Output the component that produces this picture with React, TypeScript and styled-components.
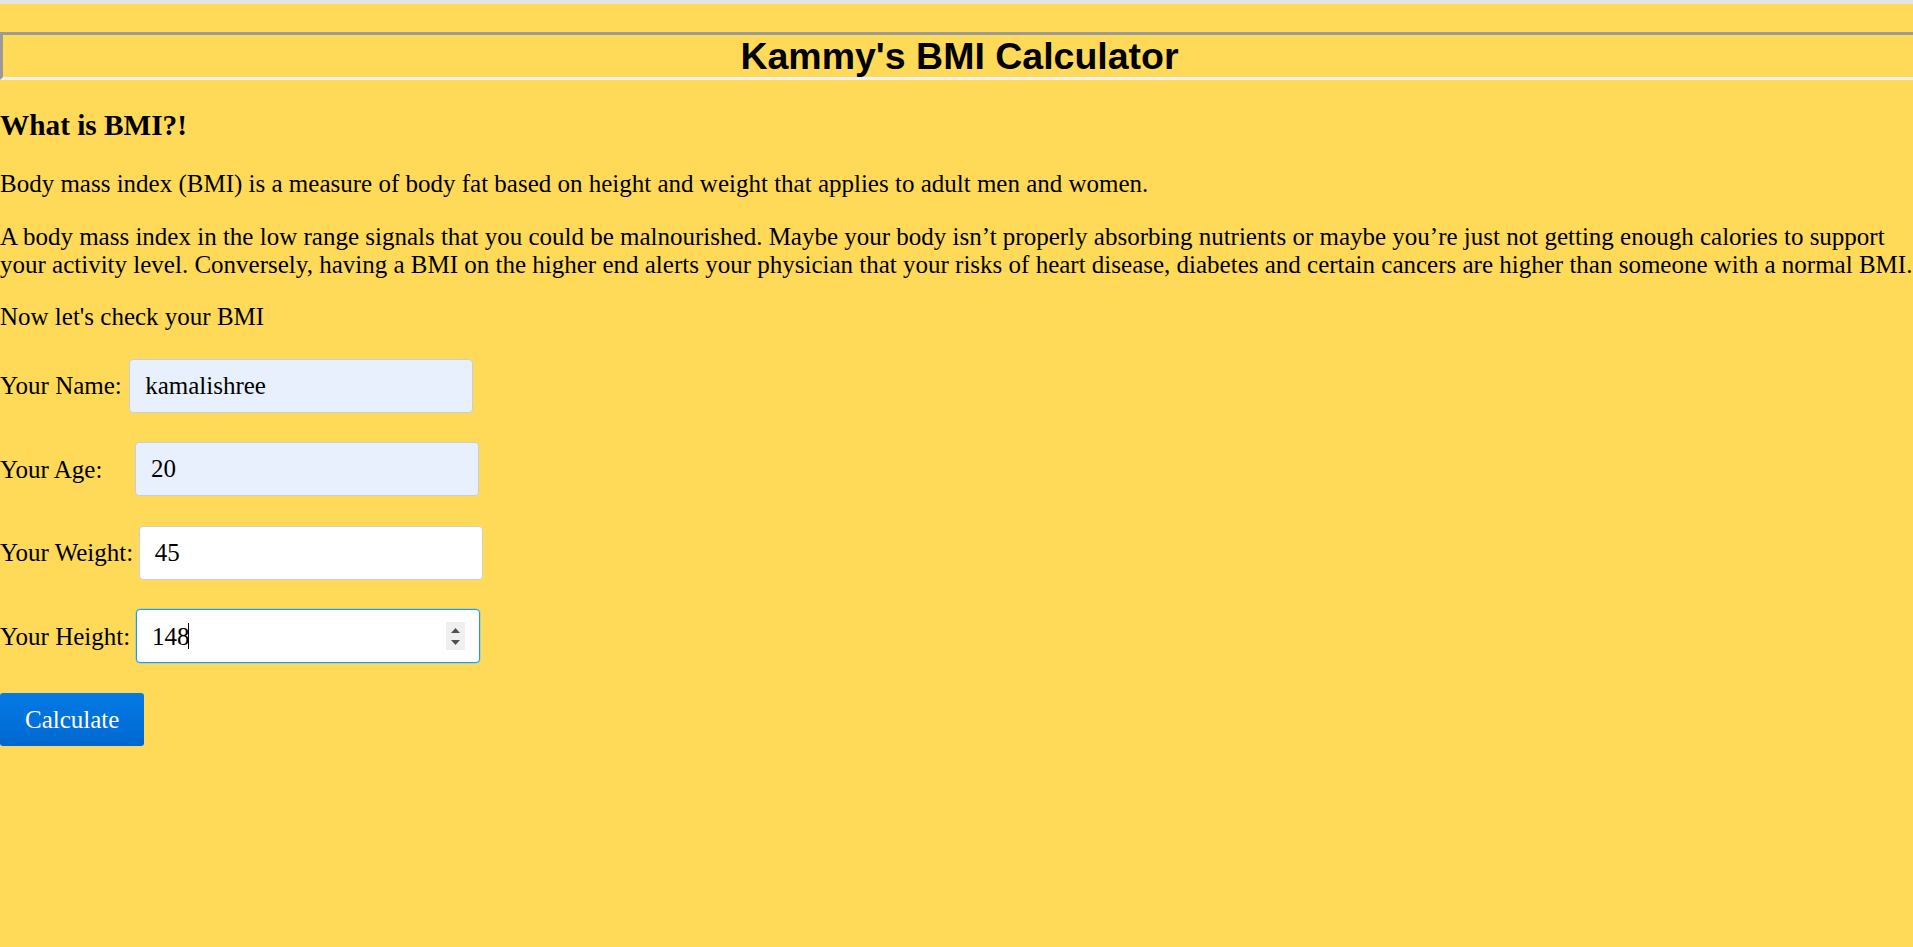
import React from "react";
import styled, { createGlobalStyle } from "styled-components";

const GlobalStyle = createGlobalStyle`
  html, body {
    margin: 0;
    padding: 0;
    overflow-x: hidden;
  }
  body {
    font-family: "Liberation Serif", "Times New Roman", serif;
    font-size: 25px;
    line-height: 1.107;
    color: #000;
    background: #ffda59;
  }
`;

const Page = styled.div`
  min-height: 100vh;
  box-sizing: border-box;
  background: #ffda59;
  border-top: 4px solid #e3e3e3;
  display: flow-root;
`;

const Title = styled.h1`
  margin: 27.5px 0 0;
  width: 100%;
  font-family: "Liberation Sans", Arial, sans-serif;
  font-size: 37.5px;
  font-weight: bold;
  line-height: 42px;
  text-align: center;
  border-style: solid;
  border-width: 3px;
  border-color: #9a9a9a #f0f0f0 #f0f0f0 #9a9a9a;
`;

const SectionTitle = styled.h3`
  margin: 29.25px 0 0;
  font-size: 29.25px;
  font-weight: bold;
  line-height: 1.107;
`;

const Paragraph = styled.p<{ $top?: number }>`
  margin: ${(p) => p.$top ?? 25}px 0 0;
`;

const Form = styled.form`
  margin-top: 27.8px;
  display: flex;
  flex-direction: column;
  align-items: flex-start;
  gap: 29.5px;
`;

const Row = styled.div`
  display: flex;
  align-items: center;
`;

const Label = styled.label<{ $space: number }>`
  margin-right: ${(p) => p.$space}px;
  white-space: nowrap;
`;

const Field = styled.input<{ $filled?: boolean }>`
  box-sizing: border-box;
  width: 344px;
  height: 54px;
  padding: 0 15px;
  margin: 0;
  font-family: "Liberation Serif", "Times New Roman", serif;
  font-size: 25px;
  color: #000;
  background: ${(p) => (p.$filled ? "#e8f0fe" : "#ffffff")};
  border: 1px solid ${(p) => (p.$filled ? "#c8ced8" : "#cfcfcf")};
  border-radius: 4px;
  outline: none;
`;

const FocusField = styled.div`
  box-sizing: border-box;
  width: 344px;
  height: 54px;
  padding: 0 14px 0 15px;
  display: flex;
  align-items: center;
  background: #ffffff;
  border: 1px solid #1e9de3;
  border-radius: 4px;
  box-shadow: 0 0 0 0.5px #7cc6ef;
`;

const FieldValue = styled.span`
  white-space: pre;
`;

const Caret = styled.span`
  width: 1px;
  height: 26px;
  margin-left: -1px;
  background: #000;
`;

const Spacer = styled.span`
  flex: 1;
`;

const Spinner = styled.span`
  width: 19px;
  height: 28px;
  background: #efefef;
  display: flex;
  flex-direction: column;
  align-items: center;
  justify-content: center;
  gap: 7px;
`;

const Button = styled.button`
  height: 53px;
  padding: 0 25px;
  margin: 0;
  border: none;
  border-radius: 3px;
  background: linear-gradient(#047ae6, #0068d0);
  color: #fff;
  font-family: "Liberation Serif", "Times New Roman", serif;
  font-size: 25px;
  line-height: 1.107;
  cursor: pointer;
`;

const Arrow = ({ up }: { up?: boolean }) => (
  <svg width="9" height="5" viewBox="0 0 9 5">
    <polygon points={up ? "4.5,0 9,5 0,5" : "0,0 9,0 4.5,5"} fill="#505050" />
  </svg>
);

export default function App() {
  return (
    <>
      <GlobalStyle />
      <Page>
        <Title>Kammy's BMI Calculator</Title>
        <SectionTitle>What is BMI?!</SectionTitle>
        <Paragraph $top={29.25}>
          Body mass index (BMI) is a measure of body fat based on height and weight that applies to adult men and women.
        </Paragraph>
        <Paragraph>
          A body mass index in the low range signals that you could be malnourished. Maybe your body isn’t properly
          absorbing nutrients or maybe you’re just not getting enough calories to support your activity level.
          Conversely, having a BMI on the higher end alerts your physician that your risks of heart disease, diabetes
          and certain cancers are higher than someone with a normal BMI.
        </Paragraph>
        <Paragraph>Now let's check your BMI</Paragraph>
        <Form onSubmit={(e) => e.preventDefault()}>
          <Row>
            <Label $space={7.4}>Your Name:</Label>
            <Field $filled defaultValue="kamalishree" />
          </Row>
          <Row>
            <Label $space={32.7}>Your Age:</Label>
            <Field $filled defaultValue="20" />
          </Row>
          <Row>
            <Label $space={5.5}>Your Weight:</Label>
            <Field defaultValue="45" />
          </Row>
          <Row>
            <Label $space={5.8}>Your Height:</Label>
            <FocusField>
              <FieldValue>148</FieldValue>
              <Caret />
              <Spacer />
              <Spinner>
                <Arrow up />
                <Arrow />
              </Spinner>
            </FocusField>
          </Row>
          <Button type="submit">Calculate</Button>
        </Form>
      </Page>
    </>
  );
}
